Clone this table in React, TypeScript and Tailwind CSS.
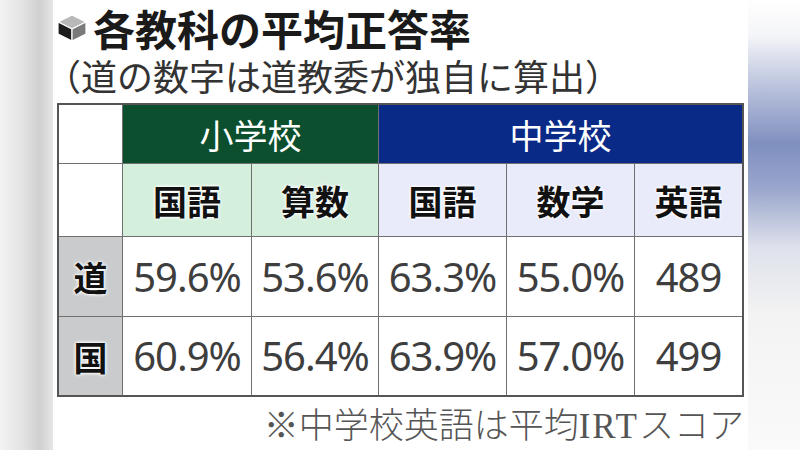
import React from "react";

const cjk = "font-['Noto_Sans_CJK_JP','Noto_Sans',sans-serif]";
const num = "font-['Noto_Sans','Noto_Sans_CJK_JP',sans-serif]";
const glow = "[text-shadow:0_0_2px_#fff,0_0_3px_#fff,0_0_4px_#fff]";

const CubeIcon = () => (
  <svg width="30" height="28" viewBox="0 0 30 28">
    <g stroke="#fff" strokeWidth="1.2" strokeLinejoin="round">
      <polygon points="15,1 29,8 15,15 1,8" fill="#b9b9b9" />
      <polygon points="1,8 15,15 15,27 1,20" fill="#1c1c1c" />
      <polygon points="15,15 29,8 29,20 15,27" fill="#7a7a7a" />
    </g>
  </svg>
);

const rows = [
  { label: "道", values: ["59.6%", "53.6%", "63.3%", "55.0%", "489"] },
  { label: "国", values: ["60.9%", "56.4%", "63.9%", "57.0%", "499"] },
];

const Cell = ({ className = "", children }: { className?: string; children?: React.ReactNode }) => (
  <div className={`flex items-center justify-center ${className}`}>{children}</div>
);

const App = () => {
  return (
    <div className="flex w-[800px] h-[450px] overflow-hidden bg-white">
      <div className="w-[53px] h-full bg-[linear-gradient(to_right,#f3f3f3_0%,#e2e2e2_45%,#d0d0d0_75%,#e6e6e6_100%)]" />

      <div className={`flex-1 h-full bg-white flex flex-col px-[4px] ${cjk}`}>
        <div className="h-[56px] flex items-center gap-[6px]">
          <CubeIcon />
          <div className="text-[42px] leading-[1.2] font-bold text-[#1a1a1a]">各教科の平均正答率</div>
        </div>
        <div className="h-[40px] flex items-center -ml-[12px]">
          <div className="text-[36px] leading-[1.1] text-[#333]">（道の数字は道教委が独自に算出）</div>
        </div>

        <div className="mt-[7px] grid grid-cols-[63px_128px_126px_127px_127px_107px] grid-rows-[58px_72px_79px_78px] gap-px bg-[#707070] border-2 border-[#555]">
          <Cell className="bg-white" />
          <Cell className="col-span-2 bg-[#0b4f2e] text-white text-[34px]">小学校</Cell>
          <Cell className="col-span-3 bg-[#0a2a88] text-white text-[34px]">中学校</Cell>

          <Cell className="bg-white" />
          {["国語", "算数"].map((s) => (
            <Cell key={s} className={`bg-[#d4efdc] text-[34px] font-bold text-[#111] ${glow}`}>
              {s}
            </Cell>
          ))}
          {["国語", "数学", "英語"].map((s) => (
            <Cell key={s} className={`bg-[#e9eafa] text-[34px] font-bold text-[#111] ${glow}`}>
              {s}
            </Cell>
          ))}

          {rows.map((r) => (
            <React.Fragment key={r.label}>
              <Cell className={`bg-[#c9cbcd] text-[34px] font-bold text-[#111] ${glow}`}>{r.label}</Cell>
              {r.values.map((v, i) => (
                <Cell key={i} className={`bg-white text-[40px] tracking-[-1px] text-[#3e3e3e] ${num}`}>
                  {v}
                </Cell>
              ))}
            </React.Fragment>
          ))}
        </div>

        <div className="flex-1 flex items-center justify-end pt-[8px]">
          <div
            className={`text-[35px] leading-[1.1] text-[#555] font-['Liberation_Serif','Noto_Sans_CJK_JP',serif] font-light ${glow}`}
          >
            ※中学校英語は平均<span className="tracking-[2px]">IRT</span>スコア
          </div>
        </div>
      </div>

      <div className="w-[52px] h-full bg-[linear-gradient(to_bottom,#ffffff_0%,#f4f5f8_8%,#b7c0db_20%,#7f8fbf_32%,#9aa6cc_42%,#dfe2ec_55%,#f3f3f3_70%,#fafafa_100%)]" />
    </div>
  );
};

export default App;
